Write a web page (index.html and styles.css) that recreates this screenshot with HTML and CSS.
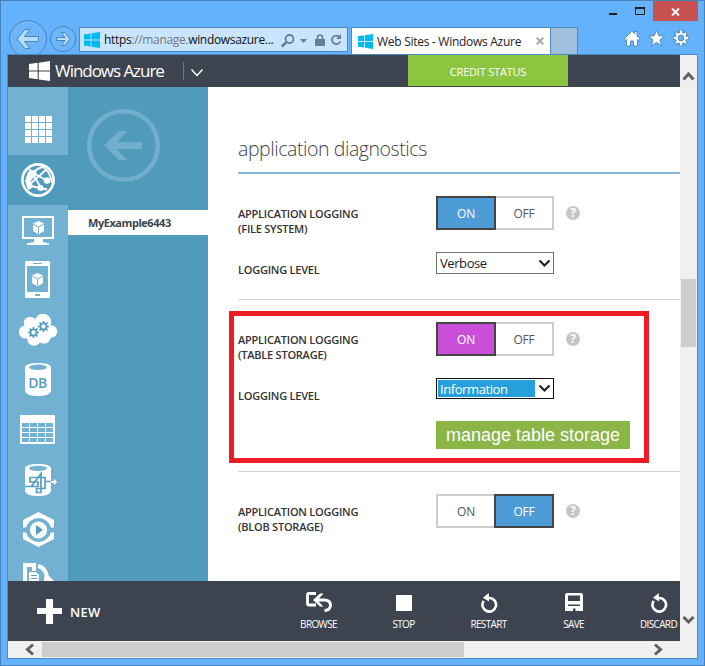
FILE: index.html
```html
<!DOCTYPE html>
<html lang="en">
<head>
<meta charset="utf-8">
<title>Web Sites - Windows Azure</title>
<link rel="stylesheet" href="styles.css">
</head>
<body>
<svg width="0" height="0" class="defs">
  <symbol id="win" viewBox="0 0 16 16"><path d="M0 2.4 6.6 1.4V7.6H0ZM7.4 1.3 16 0V7.6H7.4ZM0 8.4H6.6V14.5L0 13.6ZM7.4 8.4H16V16L7.4 14.7Z" fill="currentColor"/></symbol>
  <symbol id="gear" viewBox="-6 -6 12 12"><circle r="3.1" fill="none" stroke="currentColor" stroke-width="1.9"/><path d="M0-5.6V-3M0 5.6V3M-5.6 0H-3M5.600 0H3M-4-4-2.200-2.200M4 4 2.200 2.200M-4 4-2.200 2.200M4-4 2.200-2.200" stroke="currentColor" stroke-width="1.700"/></symbol>
  <symbol id="undo" viewBox="0 0 20 20"><path d="M4.600 8A6.800 6.800 0 1 0 10.500 5H8" fill="none" stroke="#fff" stroke-width="2.600"/><path d="M4 4.800 9.800 0 10 8.500Z" fill="#fff"/></symbol>
</svg>
<div class="window">
  <div class="titlebar">
    <svg class="caption" width="44" height="19" viewBox="609 1 44 19"><path d="M609 14H617" stroke="#1e1e1e" stroke-width="2"/><path d="M635.5 7.5H644.5V14.5H635.5Z" fill="none" stroke="#1e1e1e"/><path d="M635 8H645" stroke="#1e1e1e" stroke-width="2"/></svg>
    <div class="close"><svg width="9" height="8" viewBox="0 0 9 8"><path d="M1 .5 8 7.5M8 .5 1 7.5" stroke="#fff" stroke-width="1.9"/></svg></div>
  </div>
  <div class="navrow">
    <svg width="78" height="34" viewBox="1 20 78 34">
      <g fill="#6db5f8" stroke="#4387bf"><circle cx="28" cy="39" r="18.5"/><circle cx="63" cy="39" r="12.7"/></g>
      <path d="M17 39 25 29.5H30L24.5 36.5H38.500V41.500H24.500L30 48.500H25Z" fill="#b8dbfb" stroke="#4387bf"/>
      <path d="M70 39 65 32.500H61.500L65 37.500H56.500V40.500H65L61.500 45.500H65Z" fill="#b8dbfb" stroke="#4387bf"/>
    </svg>
    <div class="address">
      <svg class="fav" width="16" height="16"><use href="#win"/></svg>
      <span class="url"><i>https</i>://manage.<i>windowsazure...</i></span>
      <svg class="addricons" width="64" height="16" viewBox="280 31 64 16">
        <g fill="none" stroke="#687e93"><circle cx="289.500" cy="38" r="4" stroke-width="1.8"/><path d="M286.500 41.200 281.800 45.500" stroke-width="2.600"/><path d="M317.500 39V36.500Q317.500 34 320 34 322.500 34 322.500 36.500V39" stroke-width="1.700"/><path d="M339.500 36A4.300 4.300 0 1 0 340.300 40.500" stroke-width="1.800"/></g>
        <path d="M300 38H307L303.500 42ZM315 38H325V45H315ZM336 38H341V33Z" fill="#687e93"/>
      </svg>
    </div>
    <div class="tab">
      <svg class="fav" width="15" height="15" viewBox="0 0 16 16"><use href="#win"/></svg>
      <span>Web Sites - Windows Azure</span>
      <svg class="tabx" width="8" height="8" viewBox="0 0 8 8"><path d="M.7.7 7.300 7.300M7.300.7.7 7.300" stroke="#aaa" stroke-width="2"/></svg>
    </div>
    <div class="newtab"></div>
    <svg class="tools" width="70" height="22" viewBox="622 28 70 22">
      <g fill="#fff" stroke="#3d7bb0" stroke-width=".8"><path d="M624 39 632 31 634.500 33.500V31.500H637V36L640 39 639 40.500 637.500 39.500V46H633.500V41H630.500V46H626.500V39.500L625 40.500Z"/><path d="M656.500 30 658.800 35.800 664.500 36 660 39.800 661.600 45.800 656.500 42.400 651.400 45.800 653 39.800 648.500 36 654.200 35.800Z"/></g>
      <g transform="translate(681 38)"><path d="M0-8V8M-8 0H8M-5.500-5.500 5.500 5.500M-5.500 5.500 5.500-5.500" stroke="#3d7bb0" stroke-width="4"/><circle r="6" fill="#3d7bb0"/><path d="M0-7.400V7.400M-7.400 0H7.400M-5-5 5 5M-5 5 5-5" stroke="#fff" stroke-width="2.400"/><circle r="5.300" fill="#fff"/><circle r="2.900" fill="#64b1fc" stroke="#3d7bb0" stroke-width=".8"/></g>
    </svg>
  </div>
  <div class="client">
    <div class="page">
      <header class="topbar">
        <svg class="brandlogo" width="21" height="20" viewBox="0 0 16 16" preserveAspectRatio="none"><use href="#win"/></svg>
        <span class="brand">Windows Azure</span>
        <span class="sep"></span>
        <svg width="14" height="10" viewBox="0 0 14 10"><path d="M1.500 1.500 7 7.500 12.500 1.500" fill="none" stroke="#fff" stroke-width="1.500"/></svg>
        <div class="credit">CREDIT STATUS</div>
      </header>
      <div class="body">
        <nav class="rail">
          <div class="all"><svg width="60" height="68" viewBox="8 87 60 68"><path d="M25 119H52M25 126H52M25 133H52M25 140H52" stroke="#fff" stroke-width="6" stroke-dasharray="6 1"/></svg></div>
          <div class="sel"><svg width="60" height="50" viewBox="8 155 60 50"><circle cx="38" cy="180" r="15.600" fill="none" stroke="#fff" stroke-width="2.600"/><g fill="none" stroke="#fff" stroke-width="1.800"><path d="M33 173 47 180.500M33 173Q38 167 45 167M33 173 29 169M31 186 47 189.500M33 174 41 188M38 164Q50 169 52 183M30 184 47 169"/></g><g fill="#fff"><path d="M28 172 33 170 35 176 30.500 181 32 188 28 190 25 181Z"/><circle cx="33.500" cy="173.300" r="3"/><circle cx="47" cy="180.500" r="3.300"/><circle cx="40.500" cy="188" r="3"/><circle cx="30.500" cy="186" r="2.200"/></g></svg></div>
          <div><svg width="60" height="50" viewBox="8 205 60 50"><rect x="23" y="217" width="30" height="21" fill="none" stroke="#fff" stroke-width="2"/><path d="M34 239H43V242L49 243.500V245H27V243.500L34 242Z" fill="#fff"/><path d="M38.500 221 44 223.500V231L38.500 234.500 33 231V223.500Z" fill="#fff"/><path d="M33 224 38.500 227 44 224M38.500 227V234" fill="none" stroke="#72b1d2"/></svg></div>
          <div><svg width="60" height="50" viewBox="8 255 60 50"><rect x="25" y="261" width="25" height="37" rx="1.500" fill="#fff"/><path d="M27 266H48V292H27Z" fill="#72b1d2"/><path d="M33 263.500H42" stroke="#72b1d2"/><rect x="35" y="294" width="5" height="2" fill="#72b1d2"/><path d="M37.500 273 43 275.500V283L37.500 286.500 32 283V275.500Z" fill="#fff"/><path d="M32 276 37.500 279 43 276M37.500 279V286" fill="none" stroke="#72b1d2"/></svg></div>
          <div><svg width="60" height="50" viewBox="8 305 60 50"><g fill="#fff"><circle cx="43" cy="322" r="8.200"/><circle cx="30" cy="323" r="6.200"/><circle cx="25.500" cy="332" r="6.600"/><circle cx="34" cy="339" r="6.800"/><circle cx="44" cy="337" r="6.600"/><circle cx="51" cy="331.500" r="6.200"/><circle cx="37" cy="328" r="8"/></g><g color="#559dc1"><use href="#gear" x="27.500" y="326.500" width="12" height="12"/><use href="#gear" x="37.500" y="320.500" width="12" height="12"/></g></svg></div>
          <div><svg width="60" height="50" viewBox="8 355 60 50"><path d="M25 367Q26 363 38 363T51 367V391Q50 396 38 396T25 391Z" fill="#fff"/><ellipse cx="38" cy="367.300" rx="9" ry="2.700" fill="#72b1d2"/><text x="37.500" y="387.500" class="db">DB</text></svg></div>
          <div><svg width="60" height="50" viewBox="8 405 60 50"><rect x="20" y="415" width="35" height="29" rx="1" fill="#fff"/><path d="M22 425H53M22 430H53M22 435H53M22 440H53" stroke="#72b1d2" stroke-width="4" stroke-dasharray="7 1"/></svg></div>
          <div><svg width="60" height="50" viewBox="8 455 60 50"><path d="M25 468Q26 464 38 464T51 468V491Q50 496 38 496T25 491Z" fill="#fff"/><ellipse cx="38" cy="468.300" rx="9" ry="2.600" fill="#72b1d2"/><path d="M25 486.500H38V482H30V477.500H45V488.500H36.500V492.500H41V473.500L31 487M46 481.500H52" fill="none" stroke="#559dc1" stroke-width="1.700"/><path d="M51 481H54V478.500L57 482 54 485V483H51Z" fill="#fff"/></svg></div>
          <div><svg width="60" height="50" viewBox="8 505 60 50"><path d="M23 527.500V520L38.500 512 54 520V527.500H51A13 13 0 0 0 26 527.500ZM23 532.500V539L38.500 547 54 539V532.500H51A13 13 0 0 1 26 532.500Z" fill="#fff"/><circle cx="38.500" cy="530" r="8.600" fill="#fff"/><path d="M36 525 43 530 36 535Z" fill="#559dc1"/></svg></div>
          <div class="last"><svg width="60" height="26" viewBox="8 555 60 26"><path d="M23 563H36V571H32V567H27V581H23Z" fill="#fff"/><path d="M38 566Q45 567 47 577" fill="none" stroke="#fff" stroke-width="4"/><path d="M44 577 48 575 54 581H44ZM29 572H36L39 575V581H29Z" fill="#fff"/><path d="M31 575.500H37M31 578.500H37" stroke="#559dc1"/></svg></div>
        </nav>
        <aside class="panel">
          <svg width="74" height="74" viewBox="0 0 74 74"><circle cx="36.500" cy="36.500" r="34.300" fill="none" stroke="#72afcd" stroke-width="4.500"/><path d="M17 36.500 32 22H40.500L29.500 33.300H55V40H29.500L40.500 51H32Z" fill="#72afcd"/></svg>
          <div class="site">MyExample6443</div>
        </aside>
        <main>
          <h2><span>application diagnostics</span></h2>
          <div class="row t">
            <label>APPLICATION LOGGING<br>(FILE SYSTEM)</label>
            <div class="toggle"><b class="on">ON</b><b>OFF</b></div><span class="help">?</span>
          </div>
          <div class="row s">
            <label>LOGGING LEVEL</label>
            <div class="select"><span>Verbose</span><svg width="13" height="9" viewBox="0 0 13 9"><path d="M1.500 1.500 6.500 6.500 11.500 1.500" fill="none" stroke="#222" stroke-width="2.200"/></svg></div>
          </div>
          <hr>
          <div class="row t">
            <label>APPLICATION LOGGING<br>(TABLE STORAGE)</label>
            <div class="toggle"><b class="on purple">ON</b><b>OFF</b></div><span class="help">?</span>
          </div>
          <div class="row s focused">
            <label>LOGGING LEVEL</label>
            <div class="select"><span>Information</span><svg width="13" height="9" viewBox="0 0 13 9"><path d="M1.500 1.500 6.500 6.500 11.500 1.500" fill="none" stroke="#222" stroke-width="2.200"/></svg></div>
          </div>
          <div class="row"><label></label><div class="manage">manage table storage</div></div>
          <hr class="second">
          <div class="row t">
            <label>APPLICATION LOGGING<br>(BLOB STORAGE)</label>
            <div class="toggle"><b>ON</b><b class="on">OFF</b></div><span class="help">?</span>
          </div>
          <div class="callout"></div>
        </main>
      </div>
      <footer>
        <div class="new"><svg width="25" height="25" viewBox="0 0 25 25"><path d="M0 9H9V0H16V9H25V15H16V25H9V15H0Z" fill="#fff"/></svg><span>NEW</span></div>
        <div class="cmd"><svg width="28" height="24" viewBox="304 590 28 24"><path d="M315 593.500H308Q306.500 593.500 306.500 595V603.500Q306.500 605 308 605H315" fill="none" stroke="#fff" stroke-width="2.800"/><path d="M318 600H324Q329.500 600.500 329.500 605.500 329 610.500 323.500 610.500" fill="none" stroke="#fff" stroke-width="2.800"/><path d="M312 600 319 593.500H322.500L318 598.500V602L322.500 606.500H319Z" fill="#fff"/></svg><span>BROWSE</span></div>
        <div class="cmd"><svg width="16" height="24" viewBox="0 0 16 24"><path d="M0 5H16V21H0Z" fill="#fff"/></svg><span>STOP</span></div>
        <div class="cmd"><svg width="20" height="24" viewBox="0 -3 20 24"><use href="#undo" width="20" height="20"/></svg><span>RESTART</span></div>
        <div class="cmd"><svg width="18" height="24" viewBox="564 590 18 24"><path fill-rule="evenodd" d="M565.500 593H580.500L582 594.500V611H579V604.500H567V611H564V594.500ZM567 595.500V601H579V595.500ZM568 606H578V611H574.500V608.500H572V611H568Z" fill="#fff"/><path d="M564 606H568V611H565.500L564 609.500ZM578 606H582V609.500L580.500 611H578Z" fill="#fff"/></svg><span>SAVE</span></div>
        <div class="cmd"><svg width="20" height="24" viewBox="0 -3 20 24"><use href="#undo" width="20" height="20"/></svg><span>DISCARD</span></div>
      </footer>
    </div>
    <div class="vscroll">
      <svg width="17" height="20" viewBox="680 65 17 20"><path d="M683.500 79.500 688.500 74 693.500 79.500" fill="none" stroke="#606060" stroke-width="3"/></svg>
      <div class="vthumb"></div>
      <svg width="17" height="20" viewBox="680 610 17 20"><path d="M683.500 617 688.500 622 693.500 617" fill="none" stroke="#606060" stroke-width="3"/></svg>
    </div>
    <div class="hscroll">
      <svg width="34" height="17" viewBox="8 641 34 17"><path d="M33 644.500 27.500 649.500 33 654.500" fill="none" stroke="#606060" stroke-width="3"/></svg>
      <div class="hthumb"></div>
      <svg width="34" height="17" viewBox="640 641 34 17"><path d="M655 644.500 660.500 649.500 655 654.500" fill="none" stroke="#606060" stroke-width="3"/></svg>
    </div>
  </div>
</div>
</body>
</html>
```
FILE: styles.css
```css
* { box-sizing: border-box; }
body { margin: 0; font-family: "Open Sans", "Noto Sans", sans-serif; overflow: hidden; }
svg { display: block; flex: none; }
.defs { position: absolute; }
.window { width: 705px; height: 666px; background: #64b1fc; border: 1px solid #4683bd; white-space: nowrap; }
.titlebar { height: 19px; display: flex; justify-content: flex-end; padding-right: 6px; }
.close { width: 45px; height: 20px; background: #c75050; display: flex; align-items: center; justify-content: center; padding-top: 2px; flex: none; }
.navrow { height: 34px; display: flex; }
.address { width: 269px; height: 25px; margin: 7px 3px 0 0; background: #c9e4fe; border: 1px solid #4a8bc4; display: flex; align-items: center; padding: 0 3px 0 4px; font-size: 12px; color: #777; flex: none; }
.address .fav, .tab .fav { color: #00b9f2; }
.url { margin-left: 4px; width: 176px; letter-spacing: -.33px; }
.url i { font-style: normal; color: #111; }
.tab { width: 200px; height: 27px; margin-top: 7px; background: #fff; border: 1px solid #4a8bc4; border-bottom: 0; display: flex; align-items: center; padding-left: 6px; font-size: 12px; color: #222; flex: none; }
.tab span { margin-left: 4px; width: 159px; letter-spacing: -.28px; }
.newtab { width: 27px; height: 27px; margin-top: 7px; background: #a0bfdc; border: 1px solid #4a8bc4; border-width: 1px 1px 0 0; flex: none; }
.tools { margin: 8px 0 0 44px; }
.client { width: 691px; height: 605px; margin-left: 6px; border: 1px solid #4a8bc4; display: grid; grid-template: 586px 17px / 672px 17px; background: #f0f0f0; }
.page { overflow: hidden; background: #fff; display: flex; flex-direction: column; }
.topbar { height: 32px; background: #3e444f; color: #fff; display: flex; align-items: center; padding-left: 21px; flex: none; }
.brand { font-size: 17px; margin: -2px 0 0 5px; width: 128px; letter-spacing: -1.04px; }
.sep { width: 1px; height: 18px; background: #71757d; margin-right: 6px; }
.topbar svg:nth-of-type(2) { margin-top: 4px; }
.credit { width: 160px; height: 31px; margin: 0 0 1px 204px; background: #8cc540; font-size: 11px; line-height: 33px; text-align: center; letter-spacing: -.2px; }
.body { height: 494px; display: flex; flex: none; }
.rail { width: 60px; background: #72b1d2; overflow: hidden; }
.rail .sel { background: #509bbc; }
.db { font: 600 14px "Open Sans", sans-serif; fill: #559dc1; text-anchor: middle; letter-spacing: -.5px; }
.panel { width: 140px; background: #509bbc; }
.panel svg { margin: 22px 0 27px 19px; }
.site { height: 25px; background: #fff; color: #3b444e; font-size: 11px; font-weight: 700; line-height: 26px; padding-left: 20px; letter-spacing: -.45px; }
main { width: 472px; padding-left: 30px; position: relative; color: #333; }
h2 { height: 87px; margin: 0; border-bottom: 2px solid #86b6e0; font-size: 19.5px; font-weight: 300; line-height: 26px; padding-top: 49px; color: #444; letter-spacing: -.43px; }
.row { display: flex; margin-top: 22px; height: 28px; }
.row.t { height: 34px; }
.row.s { height: 22px; }
.row.s.focused { height: 21px; }
label { width: 198px; padding-top: 10px; font-size: 11px; font-weight: 600; line-height: 15px; letter-spacing: -.23px; }
.toggle { width: 118px; display: flex; font-size: 12px; color: #555; letter-spacing: -.2px; }
.toggle b { width: 60px; height: 34px; border: 2px solid #ccc; font-weight: 400; text-align: center; line-height: 31px; }
.toggle b + b { margin-left: -2px; }
.toggle .on { background: #4e9cd7; color: #fff; border-color: #444; position: relative; }
.toggle .purple { background: #c94fd9; }
.help { width: 14px; height: 14px; margin: 10px 0 0 12px; border-radius: 50%; background: #c6c6c6; color: #fff; font-size: 12px; font-weight: 700; line-height: 14px; text-align: center; }
.select { width: 118px; border: 1px solid #707070; display: flex; align-items: center; justify-content: space-between; padding: 0 3px 0 3px; font-size: 13px; color: #222; }
.select span { letter-spacing: -.42px; }
.select svg { margin-right: -1px; }
.focused .select { border-color: #111; padding-left: 1px; }
.focused span { background: #269fdc; color: #fff; width: 97px; height: 17px; line-height: 18px; padding-left: 2px; }
.manage { width: 194px; height: 28px; background: #8bb546; color: #fff; font: 18px/28px "Liberation Sans", sans-serif; text-align: center; }
hr { height: 1px; border: 0; margin: 25px 0 0; background: #d6d6d6; }
hr.second { margin-top: 22px; }
.callout { position: absolute; left: 21px; top: 224px; width: 420px; height: 152px; border: 5px solid #ee1c25; }
footer { height: 60px; background: #3e444f; color: #fff; display: flex; flex: none; overflow: hidden; }
.new { width: 268px; flex: none; padding: 18px 0 0 29px; display: flex; gap: 8px; font-size: 13px; font-weight: 600; line-height: 27px; }
.new span { letter-spacing: .3px; }
.cmd { width: 85px; flex: none; display: flex; flex-direction: column; align-items: center; padding-top: 9px; font-size: 10px; letter-spacing: -.65px; }
.cmd span { line-height: 14px; margin-top: 3px; }
.vscroll { display: flex; flex-direction: column; padding-top: 10px; }
.vthumb { height: 68px; width: 15px; margin: 194px 1px 263px; background: #cdcdcd; }
.hscroll { display: flex; }
.hthumb { width: 422px; height: 15px; margin: 1px 176px 0 0; background: #cdcdcd; }
```
